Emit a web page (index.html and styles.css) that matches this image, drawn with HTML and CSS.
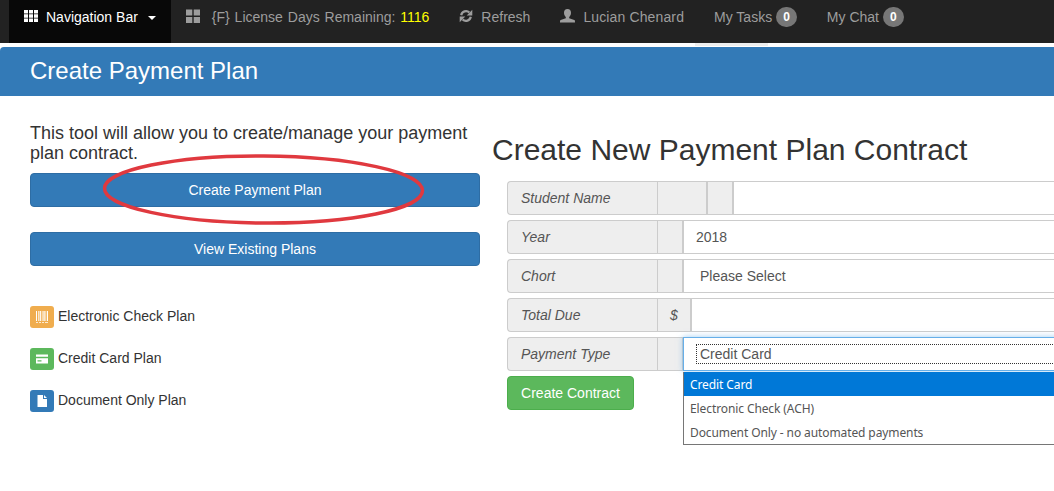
FILE: index.html
```html
<!DOCTYPE html>
<html lang="en">
<head>
<meta charset="utf-8">
<title>Create Payment Plan</title>
<link rel="stylesheet" href="styles.css">
</head>
<body>
<nav class="navbar">
  <a class="nav-item brand">
    <svg class="nav-icon brand-icon" viewBox="0 0 14 14"><path d="M0 1h4v3.400H0zM5 1h4v3.400H5zM10 1h4v3.400h-4zM0 5.300h4v3.400H0zM5 5.300h4v3.400H5zM10 5.300h4v3.400h-4zM0 9.600h4V13H0zM5 9.600h4V13H5zM10 9.600h4V13h-4z"/></svg>
    <span>Navigation Bar</span>
    <i class="caret"></i>
  </a>
  <a class="nav-item">
    <svg class="nav-icon wide-gap" viewBox="0 0 14 14"><path d="M0 0.500h6.300v6H0zM7.700 0.500H14v6H7.700zM0 7.900h6.300v6H0zM7.700 7.900H14v6H7.700z"/></svg>
    <span class="license">{F} License Days Remaining: <span class="days">1116</span></span>
  </a>
  <a class="nav-item">
    <svg class="nav-icon" viewBox="0 0 14 14"><path class="refresh-arc" d="M2.200 6.200A4.900 4.900 0 0 1 10.400 3.500M11.800 7.800A4.900 4.900 0 0 1 3.600 10.500"/><path d="M13.300 0.800V6.400H7.700ZM0.700 13.200V7.600H6.300Z"/></svg>
    <span>Refresh</span>
  </a>
  <a class="nav-item">
    <svg class="nav-icon user-icon" viewBox="0 0 15 14"><path d="M7.500 0C9.800 0 11 1.700 11 3.800C11 5.800 10.100 7.300 9.200 8V9.200L14.300 11C15 11.300 15 12.200 15 13.500H0C0 12.200 0 11.300 0.700 11L5.800 9.200V8C4.900 7.300 4 5.800 4 3.800C4 1.700 5.200 0 7.500 0Z"/></svg>
    <span class="user-name">Lucian Chenard</span>
  </a>
  <a class="nav-item">
    <span>My Tasks</span><span class="badge">0</span>
  </a>
  <a class="nav-item">
    <span>My Chat</span><span class="badge">0</span>
  </a>
  <span class="nav-tab-sliver"></span>
</nav>

<header class="page-title">Create Payment Plan</header>

<main class="content">
  <section class="left">
    <p class="intro">This tool will allow you to create/manage your payment plan contract.</p>
    <div class="actions">
      <button class="btn btn-primary">Create Payment Plan</button>
      <button class="btn btn-primary">View Existing Plans</button>
      <svg class="annotation" viewBox="0 0 330 78"><ellipse cx="165.500" cy="38.500" rx="159" ry="33.500" transform="rotate(0.400 164 39)"/></svg>
    </div>
    <ul class="legend">
      <li>
        <span class="legend-icon orange"><svg viewBox="0 0 14 14"><path d="M1 1h1v10H1zM3 1h.7v10H3zM4.600 1h1.300v10H4.600zM6.800 1h.7v10h-.7zM8.400 1h1.300v10H8.400zM10.500 1h.7v10h-.7zM12 1h1v10h-1zM1 12.200h2v.8H1zM4 12.200h2v.8H4zM7 12.200h2v.8H7zM10 12.200h3v.8h-3z"/></svg></span>
        Electronic Check Plan
      </li>
      <li>
        <span class="legend-icon green"><svg viewBox="0 0 14 14"><path d="M1 2.500h12v2.300H1zM1 6.300h12v5.200H1zM2.500 8.300v1.200h4V8.300z" fill-rule="evenodd"/></svg></span>
        Credit Card Plan
      </li>
      <li>
        <span class="legend-icon blue"><svg viewBox="0 0 14 14"><path d="M2.500 1H8v4h4v8H2.500zM9 1l3 3H9z"/></svg></span>
        Document Only Plan
      </li>
    </ul>
  </section>

  <section class="right">
    <h1>Create New Payment Plan Contract</h1>
    <form class="plan-form">
      <div class="row">
        <span class="label">Student Name</span>
        <span class="addon w50"></span>
        <span class="addon w26"></span>
        <span class="field"></span>
      </div>
      <div class="row">
        <span class="label">Year</span>
        <span class="addon w26"></span>
        <span class="field pad-year">2018</span>
      </div>
      <div class="row">
        <span class="label">Chort</span>
        <span class="addon w26"></span>
        <span class="field pad-select">Please Select</span>
      </div>
      <div class="row">
        <span class="label">Total Due</span>
        <span class="addon w34">$</span>
        <span class="field"></span>
      </div>
      <div class="row">
        <span class="label">Payment Type</span>
        <span class="addon w26"></span>
        <span class="field focused"><span class="focus-ring">Credit Card</span></span>
        <ul class="dropdown">
          <li class="selected">Credit Card</li>
          <li>Electronic Check (ACH)</li>
          <li>Document Only - no automated payments</li>
        </ul>
      </div>
      <button type="button" class="btn btn-success">Create Contract</button>
    </form>
  </section>
</main>
</body>
</html>
```
FILE: styles.css
```css
* { box-sizing: border-box; }

html, body {
  margin: 0;
  padding: 0;
  width: 1054px;
  height: 491px;
  overflow: hidden;
  background: #fff;
  font-family: "Liberation Sans", Arial, sans-serif;
  font-size: 14px;
  color: #333;
}

.navbar {
  position: relative;
  display: flex;
  height: 43px;
  padding-left: 9px;
  background: #222;
}

.nav-item {
  display: flex;
  align-items: flex-start;
  padding: 7px 15px 0;
  line-height: 20px;
  color: #9d9d9d;
  white-space: nowrap;
}

.nav-icon {
  width: 14px;
  height: 14px;
  margin-top: 2px;
  margin-right: 8px;
  fill: #9d9d9d;
  flex: none;
}

.wide-gap { margin-right: 12px; }

.refresh-arc {
  fill: none;
  stroke: #9d9d9d;
  stroke-width: 2.200;
}

.user-icon { width: 15px; }

.license { word-spacing: 1px; }

.user-name { letter-spacing: .13px; }

.brand {
  background: #080808;
  color: #fff;
}

.brand-icon {
  margin-right: 8px;
  fill: #fff;
}

.caret {
  width: 0;
  height: 0;
  margin: 9px 0 0 10px;
  border-top: 4px solid #fff;
  border-left: 4px solid transparent;
  border-right: 4px solid transparent;
}

.days { color: #ff0; }

.badge {
  min-width: 20px;
  height: 20px;
  margin-left: 4px;
  padding: 3px 7px;
  border-radius: 10px;
  background: #777;
  color: #fff;
  font-size: 12px;
  font-weight: bold;
  line-height: 14px;
  text-align: center;
}

.nav-tab-sliver {
  position: absolute;
  left: 695px;
  top: 43px;
  width: 73px;
  height: 3px;
  background: #eee;
}

.page-title {
  height: 49px;
  margin-top: 4px;
  padding-left: 30px;
  border-top-left-radius: 4px;
  background: #337ab7;
  color: #fff;
  font-size: 24px;
  line-height: 47px;
}

.content {
  display: flex;
  padding-left: 30px;
}

.left {
  flex: none;
  width: 450px;
  padding-top: 27px;
}

.intro {
  margin: 0 0 10px;
  font-size: 18px;
  line-height: 20px;
  color: #333;
}

.actions {
  position: relative;
  display: flex;
  flex-direction: column;
  gap: 25px;
}

.annotation {
  position: absolute;
  left: 68px;
  top: -22px;
  width: 330px;
  height: 78px;
  fill: none;
  stroke: #e0393f;
  stroke-width: 3.500;
  pointer-events: none;
}

.btn {
  display: block;
  height: 34px;
  padding: 6px 12px;
  border: 1px solid transparent;
  border-radius: 4px;
  font-family: inherit;
  font-size: 14px;
  line-height: 20px;
  color: #fff;
  text-align: center;
}

.btn-primary {
  width: 100%;
  background: #337ab7;
  border-color: #2e6da4;
}

.btn-success {
  width: 127px;
  background: #5cb85c;
  border-color: #4cae4c;
}

.legend {
  display: flex;
  flex-direction: column;
  gap: 18px;
  margin: 38px 0 0;
  padding: 0;
  list-style: none;
  font-size: 14px;
  line-height: 24px;
}

.legend li {
  display: flex;
  align-items: center;
  gap: 4px;
}

.legend-icon {
  display: flex;
  align-items: center;
  justify-content: center;
  width: 24px;
  height: 22px;
  margin-top: 2px;
  border-radius: 3px;
}

.legend-icon svg {
  width: 14px;
  height: 14px;
  fill: #fff;
}

.orange { background: #f0ad4e; }
.green { background: #5cb85c; }
.blue { background: #337ab7; }

.right {
  flex: none;
  width: 700px;
  margin-left: 12px;
  padding-top: 35px;
}

h1 {
  margin: 0 0 13px;
  font-size: 30px;
  font-weight: 400;
  line-height: 37px;
  color: #333;
}

.plan-form {
  display: flex;
  flex-direction: column;
  gap: 5px;
  margin-left: 15px;
}

.row {
  position: relative;
  display: flex;
  height: 34px;
}

.label, .addon {
  display: block;
  flex: none;
  height: 34px;
  border: 1px solid #ccc;
  background: #eee;
  color: #555;
  font-style: italic;
  line-height: 32px;
}

.label {
  width: 150px;
  padding-left: 13px;
  border-right: 0;
  border-radius: 4px 0 0 4px;
}

.addon { text-align: center; }

.w26 { width: 26px; }
.w34 { width: 34px; }
.w50 { width: 50px; }

.field {
  display: block;
  flex: 1;
  height: 34px;
  border: 1px solid #ccc;
  background: #fff;
  color: #555;
  line-height: 32px;
}

.pad-year { padding-left: 12px; }
.pad-select { padding-left: 16px; }

.field.focused {
  position: relative;
  padding: 6px 0 0 12px;
  line-height: 18px;
  border-color: #66afe9;
  box-shadow: 0 0 6px rgba(102, 175, 233, .6);
}

.focus-ring {
  display: block;
  height: 20px;
  padding-left: 3px;
  border: 1px dotted #333;
  border-right: 0;
}

.dropdown {
  position: absolute;
  left: 176px;
  top: 35px;
  right: 0;
  margin: 0;
  padding: 0;
  list-style: none;
  border: 1px solid #767676;
  border-top: 0;
  background: #fff;
  font-family: "Noto Sans", sans-serif;
  font-size: 12px;
  letter-spacing: -.1px;
  color: #555;
  z-index: 2;
}

.dropdown li {
  height: 24px;
  padding: 1px 0 0 6px;
  line-height: 24px;
  white-space: nowrap;
}

.dropdown .selected {
  background: #0078d7;
  color: #fff;
}
```
